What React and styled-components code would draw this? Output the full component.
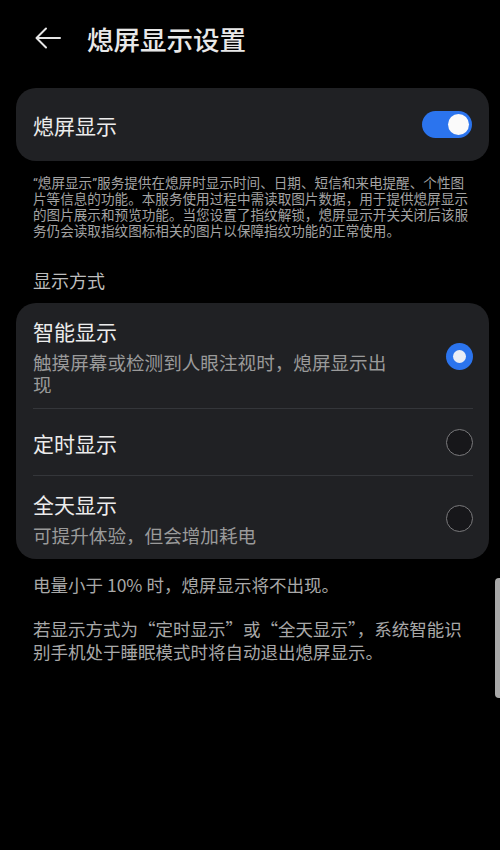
import React from "react";
import styled, { createGlobalStyle } from "styled-components";

const Global = createGlobalStyle`
  html, body { margin: 0; padding: 0; background: #000; }
  body { font-family: "Noto Sans CJK SC", "Noto Sans", sans-serif; color: #e6e6e6; }
  * { box-sizing: border-box; }
`;

const Page = styled.div`
  position: relative;
  width: 500px;
  min-height: 850px;
  background: #000;
  overflow: hidden;
`;

const Header = styled.header`
  display: flex;
  align-items: center;
  height: 76px;
  padding-left: 33px;
  gap: 24px;
`;

const BackButton = styled.button`
  display: flex;
  align-items: center;
  justify-content: center;
  width: 30px;
  height: 30px;
  padding: 0;
  background: none;
  border: none;
  color: #e6e6e6;
`;

const Title = styled.h1`
  margin: 0;
  font-size: 26.5px;
  font-weight: 500;
  color: #e8e8e8;
`;

const Card = styled.section`
  margin: ${(p) => p.$mt || 0}px 11px 0 16px;
  background: #202124;
  border-radius: 20px;
  overflow: hidden;
`;

const SwitchRow = styled.div`
  display: flex;
  align-items: center;
  justify-content: space-between;
  height: 73px;
  padding: 0 17px;
`;

const RowLabel = styled.div`
  font-size: 21px;
  line-height: 28px;
  color: #ececec;
`;

const Toggle = styled.div`
  position: relative;
  width: 50px;
  height: 27px;
  border-radius: 14px;
  background: #2b74ee;
  &::after {
    content: "";
    position: absolute;
    top: 3px;
    right: 3px;
    width: 21px;
    height: 21px;
    border-radius: 50%;
    background: #fafafa;
  }
`;

const Note = styled.p`
  margin: 14px 0 0;
  padding: 0 28px 0 33px;
  font-family: Roboto, "Noto Sans CJK SC", sans-serif;
  font-size: 13.6px;
  line-height: 16px;
  color: #a3a3a3;
`;

const SectionLabel = styled.div`
  margin: 29px 0 11px;
  padding-left: 33px;
  font-size: 18px;
  line-height: 24px;
  color: #bdbdbd;
`;

const OptionRow = styled.div`
  display: flex;
  align-items: center;
  justify-content: space-between;
  min-height: 66px;
  padding: 14px 16px 13px 17px;
`;

const Divider = styled.div`
  height: 1px;
  margin: 0 16px 0 17px;
  background: #34363a;
`;

const OptionText = styled.div`
  display: flex;
  flex-direction: column;
  gap: 6px;
  max-width: 370px;
`;

const OptionSub = styled.div`
  font-size: 18.6px;
  line-height: 22px;
  color: #9a9a9a;
`;

const Radio = styled.div`
  flex: none;
  width: 27px;
  height: 27px;
  border-radius: 50%;
  display: flex;
  align-items: center;
  justify-content: center;
  background: ${(p) => (p.$on ? "#2b74ee" : "#17171a")};
  border: ${(p) => (p.$on ? "none" : "1.5px solid #7a7a7c")};
  &::after {
    content: "";
    display: ${(p) => (p.$on ? "block" : "none")};
    width: 13px;
    height: 13px;
    border-radius: 50%;
    background: #e9edf5;
  }
`;

const Info = styled.p`
  margin: ${(p) => p.$mt}px 0 0;
  padding: 0 22px 0 33px;
  font-size: 17.5px;
  line-height: 23px;
  color: #a8a8a8;
`;

const SideHandle = styled.div`
  position: absolute;
  right: 0;
  top: 578px;
  width: 5px;
  height: 120px;
  background: #a9a9a9;
  border-radius: 4px 0 0 4px;
`;

const options = [
  { title: "智能显示", sub: "触摸屏幕或检测到人眼注视时，熄屏显示出现", on: true },
  { title: "定时显示" },
  { title: "全天显示", sub: "可提升体验，但会增加耗电" },
];

export default function App() {
  return (
    <Page>
      <Global />
      <Header>
        <BackButton aria-label="back">
          <svg width="28" height="24" viewBox="0 0 28 24" fill="none" stroke="#e6e6e6" strokeWidth="2" strokeLinecap="round" strokeLinejoin="round">
            <path d="M26 12H3" />
            <path d="M12 2.5L2.5 12L12 21.5" />
          </svg>
        </BackButton>
        <Title>熄屏显示设置</Title>
      </Header>

      <Card $mt={12}>
        <SwitchRow>
          <RowLabel>熄屏显示</RowLabel>
          <Toggle />
        </SwitchRow>
      </Card>

      <Note>
        “熄屏显示”服务提供在熄屏时显示时间、日期、短信和来电提醒、个性图片等信息的功能。本服务使用过程中需读取图片数据，用于提供熄屏显示的图片展示和预览功能。当您设置了指纹解锁，熄屏显示开关关闭后该服务仍会读取指纹图标相关的图片以保障指纹功能的正常使用。
      </Note>

      <SectionLabel>显示方式</SectionLabel>

      <Card>
        {options.map((o, i) => (
          <React.Fragment key={o.title}>
            {i > 0 && <Divider />}
            <OptionRow>
              <OptionText>
                <RowLabel>{o.title}</RowLabel>
                {o.sub && <OptionSub>{o.sub}</OptionSub>}
              </OptionText>
              <Radio $on={o.on} />
            </OptionRow>
          </React.Fragment>
        ))}
      </Card>

      <Info $mt={14}>电量小于 10% 时，熄屏显示将不出现。</Info>
      <Info $mt={21}>若显示方式为“定时显示”或“全天显示”，系统智能识别手机处于睡眠模式时将自动退出熄屏显示。</Info>

      <SideHandle />
    </Page>
  );
}
